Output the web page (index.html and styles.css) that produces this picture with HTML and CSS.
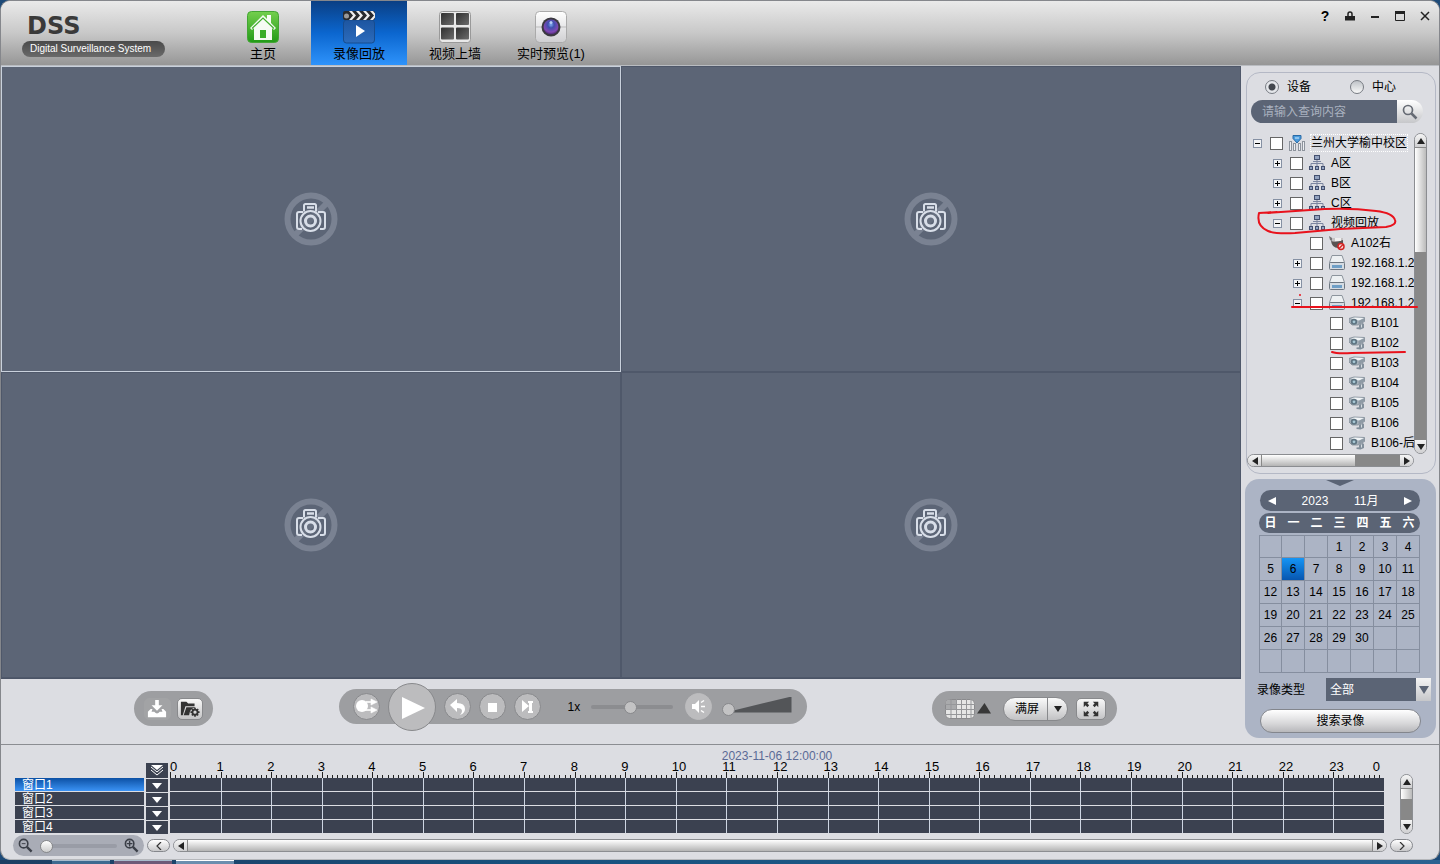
FILE: index.html
```html
<!DOCTYPE html>
<html lang="zh-CN">
<head>
<meta charset="utf-8">
<title>DSS - 录像回放</title>
<link rel="stylesheet" href="styles.css">
</head>
<body>
<svg class="defs" aria-hidden="true">
  <defs>
    <linearGradient id="gGreen" x1="0" y1="0" x2="0" y2="1"><stop offset="0" stop-color="#74cf4e"/><stop offset="1" stop-color="#229a17"/></linearGradient>
    <linearGradient id="gBlue" x1="0" y1="0" x2="0" y2="1"><stop offset="0" stop-color="#1d55a0"/><stop offset="1" stop-color="#2c6cbd"/></linearGradient>
    <linearGradient id="gDark" x1="0" y1="0" x2="1" y2="1"><stop offset="0" stop-color="#2f2f2f"/><stop offset="1" stop-color="#6c6c6c"/></linearGradient>
    <linearGradient id="gLight" x1="0" y1="0" x2="0" y2="1"><stop offset="0" stop-color="#ffffff"/><stop offset="1" stop-color="#cfcfd2"/></linearGradient>
    <radialGradient id="gLens" cx=".5" cy=".35" r=".7"><stop offset="0" stop-color="#7fa8f0"/><stop offset=".3" stop-color="#3f4fae"/><stop offset=".7" stop-color="#8148b5"/><stop offset="1" stop-color="#33204e"/></radialGradient>
  </defs>
  <symbol id="nocam" viewBox="0 0 54 54">
    <circle cx="27" cy="27" r="23.5" fill="none" stroke="#7a8292" stroke-width="6"/>
    <path d="M11 43 43 11" stroke="#7a8292" stroke-width="6"/>
    <path d="M13 20h6l2-2v-6h11v6l2 2h6v18H13z" fill="#5c6576" fill-opacity=".6"/>
    <g fill="none" stroke="#d8dee8" stroke-width="2">
      <path d="M20 19.500v-6q0-1.500 1.500-1.500h9q1.500 0 1.500 1.500v6M18 37h-3q-2 0-2-2V22q0-2 2-2h4M34 20h5q2 0 2 2v13q0 2-2 2h-3"/>
      <circle cx="26.500" cy="29" r="10"/><circle cx="26.500" cy="29" r="5" stroke-width="3"/>
      <path d="M23 15.500h7" stroke-width="2.500"/>
    </g>
  </symbol>
  <symbol id="org" viewBox="0 0 16 16">
    <g fill="#93a3c0" stroke="#44506f"><rect x="5.500" y=".5" width="5" height="4"/><rect x=".5" y="11.500" width="3" height="3"/><rect x="6.500" y="11.500" width="3" height="3"/><rect x="12.500" y="11.500" width="3" height="3"/></g>
    <path d="M8 5v6M2 11V8.500h12V11M4 6.500h8" fill="none" stroke="#7c86a0"/>
  </symbol>
  <symbol id="root" viewBox="0 0 16 16">
    <g fill="#eceef2" stroke="#8d939c"><rect x=".5" y="6.500" width="2" height="9"/><rect x="4.500" y="8.500" width="2" height="7"/><rect x="9.500" y="8.500" width="2" height="7"/><rect x="13.500" y="6.500" width="2" height="9"/></g>
    <path d="M4 .5h8v3L8 8 4 3.500z" fill="#4a9bdc" stroke="#2a6aa5"/><path d="M6 3h4" stroke="#d3ecff"/>
  </symbol>
  <symbol id="dome" viewBox="0 0 16 16">
    <path d="M0 1l3 2h11v4L9 8 2 6z" fill="#c4c2c3"/><path d="M0 1l3 2v3L1 5z" fill="#77767a"/><path d="M2 6q5 2 12-1 1 8-5 8-6 0-7-7z" fill="#5a5352"/><path d="M6 3h6v3H6z" fill="#efefef"/>
    <circle cx="12" cy="11.500" r="3" fill="#f7dada" stroke="#d32424" stroke-width="1.500"/><path d="M10 13.500l4-4" stroke="#d32424" stroke-width="1.500"/>
  </symbol>
  <symbol id="nvr" viewBox="0 0 16 16">
    <path d="M3 .5h10l2.500 7H.5z" fill="#edf0f2" stroke="#8c949d"/><rect x=".5" y="7.500" width="15" height="7" rx="1" fill="#d5dce3" stroke="#6d7680"/><rect x="3" y="10" width="10" height="3" fill="#6f9fc6"/>
  </symbol>
  <symbol id="cam" viewBox="0 0 16 16">
    <path d="M0 3.500 5 2l10.500.5v4L9 10H3L0 7z" fill="#a9b3bc" stroke="#7f8a95" stroke-width=".8"/>
    <path d="M2 3.300 6 2.500l9 .5-5 2.500z" fill="#f1f4f6"/><path d="M9.500 6 15 3.500v2.800L9.500 9.500z" fill="#8e9aa5"/>
    <ellipse cx="5" cy="6.800" rx="3.200" ry="3" fill="#5e7482"/><circle cx="5" cy="6.800" r="1.400" fill="#a8c9d6"/>
    <path d="M10 10l3.500-2 1.500 1v4l-3.500 1.500-4-.5v-1.500l2.500-.3z" fill="#828f9b"/><path d="M12.500 9.500v3" stroke="#d6dde2"/>
  </symbol>
  <symbol id="mag" viewBox="0 0 16 16"><circle cx="6" cy="6" r="4.500" fill="none" stroke="currentColor" stroke-width="1.700"/><path d="M9.500 9.500l5 5" stroke="currentColor" stroke-width="2.500"/></symbol>
</svg>

<div class="window">
  <header class="topbar">
    <div class="brand"><h1 class="brand-name">DSS</h1><span class="brand-sub">Digital Surveillance System</span></div>
    <nav class="tabs">
      <button class="tab"><svg viewBox="0 0 34 34"><rect x="1.500" y="1.500" width="31" height="31" rx="4" fill="url(#gGreen)" stroke="#43a535"/><path d="M4 18 17 5l4 4V5h4v8l5 5-2 2-2-2v12H8V18l-2 2z" fill="#fff" opacity=".95"/><path d="M6 18.500 17 8l11 10.500" fill="none" stroke="#43b02f" stroke-width="1.200"/><path d="M14 20h6v8h-6z" fill="#3aad28"/></svg><span>主页</span></button>
      <button class="tab tab-on"><svg viewBox="0 0 34 34"><rect x="1.500" y="10" width="31" height="23" rx="3" fill="url(#gBlue)" stroke="#174c8e"/><rect x="1" y="1" width="32" height="9" rx="2" fill="#292b2e"/><path d="M7 1h3l4 4.500L10 10H7l4-4.500zM14 1h3l4 4.500-4 4.500h-3l4-4.500zM21 1h3l4 4.500-4 4.500h-3l4-4.500zM28 1h3l2 2.500v4L31 10h-3l4-4.500z" fill="#eee"/><circle cx="4.500" cy="6" r="2.500" fill="#999"/><path d="M14 15l9 6-9 6z" fill="#fff"/></svg><span>录像回放</span></button>
      <button class="tab"><svg viewBox="0 0 34 34"><rect x="1.500" y="1.500" width="31" height="31" rx="3" fill="#e9e9e9" stroke="#999"/><g fill="url(#gDark)"><rect x="3" y="3" width="13" height="12" rx="1"/><rect x="18" y="3" width="13" height="12" rx="1"/><rect x="3" y="17.500" width="13" height="12" rx="1"/><rect x="18" y="17.500" width="13" height="12" rx="1"/></g></svg><span>视频上墙</span></button>
      <button class="tab"><svg viewBox="0 0 34 34"><rect x="1.500" y="1.500" width="31" height="31" rx="4" fill="url(#gLight)" stroke="#aaa"/><path d="M2 17h30" stroke="#bbb"/><circle cx="17" cy="17" r="9.500" fill="#3b3940"/><circle cx="17" cy="17" r="7.500" fill="url(#gLens)"/><circle cx="17" cy="12.500" r="1.500" fill="#b7ccf5"/></svg><span>实时预览(1)</span></button>
    </nav>
    <div class="winbtns">
      <button aria-label="帮助">?</button>
      <button aria-label="锁定"><svg viewBox="0 0 10 10"><path d="M3 5V3q0-2 2-2t2 2v2" fill="none" stroke="#222" stroke-width="1.500"/><path d="M0 5h10v4.500H0z" fill="#222"/></svg></button>
      <button aria-label="最小化"><svg viewBox="0 0 10 10"><path d="M1 6h8" stroke="#222" stroke-width="2"/></svg></button>
      <button aria-label="最大化"><svg viewBox="0 0 10 10"><path d="M.5 1v8.500h9V1" fill="none" stroke="#222"/><path d="M0 1.500h10" stroke="#222" stroke-width="3"/></svg></button>
      <button aria-label="关闭"><svg viewBox="0 0 10 10"><path d="M1 1l8 8M9 1l-8 8" stroke="#222" stroke-width="1.500"/></svg></button>
    </div>
  </header>

  <main class="main">
    <section class="stage">
      <div class="videos">
        <div class="video video-on"><svg class="nocam"><use href="#nocam"/></svg></div>
        <div class="video"><svg class="nocam"><use href="#nocam"/></svg></div>
        <div class="video"><svg class="nocam"><use href="#nocam"/></svg></div>
        <div class="video"><svg class="nocam"><use href="#nocam"/></svg></div>
      </div>
      <div class="controls">
        <div class="pill pill-files">
          <button class="sq sq-off" aria-label="下载"><svg viewBox="0 0 26 22"><path d="M11 1h4v6h4l-6 6-6-6h4z" fill="#fff"/><path d="M3 14l3-3h2l-1 3h3q3 4 6 0h3l-1-3h2l3 3v6H3z" fill="#fff"/></svg></button>
          <button class="sq" aria-label="文件设置"><svg viewBox="0 0 26 22"><path d="M3 3h6l2 2h7v3H8L5 18H3z" fill="#333"/><path d="M9 9h10l-1 1q-5 0-6 8H6z" fill="#333"/><circle cx="18.500" cy="14.500" r="2.800" fill="none" stroke="#333" stroke-width="2"/><path d="M18.500 9.500v2M18.500 17.500v2M13.500 14.500h2M21.500 14.500h2M15 11l1.500 1.500M20.500 16.500 22 18M15 18l1.500-1.500M20.500 12.500 22 11" stroke="#333" stroke-width="1.800"/></svg></button>
        </div>
        <div class="pill pill-play">
          <button class="rd" aria-label="同步"><svg viewBox="0 0 27 27"><circle cx="9" cy="13" r="6" fill="#fff"/><path d="M13 8.500h5V6l6 3-6 3V9.500h-5zM13 16.500h5V14l6 3-6 3v-2.500h-5z" fill="#fff" stroke="#fff" stroke-width=".6"/></svg></button>
          <button class="rd rd-big" aria-label="播放"><svg viewBox="0 0 48 48"><path d="M14 14l23 11-23 11z" fill="#fff"/></svg></button>
          <button class="rd" aria-label="倒放"><svg viewBox="0 0 27 27"><path d="M6 12l7-6v4q8 0 8 6 0 4-5 6 2-2 2-4 0-3-5-3v4z" fill="#fff"/></svg></button>
          <button class="rd" aria-label="停止"><svg viewBox="0 0 27 27"><path d="M9 10h9v9H9z" fill="#fff"/></svg></button>
          <button class="rd" aria-label="单帧播放"><svg viewBox="0 0 27 27"><path d="M8 7l7 6-7 6zM14 8h5v2h-1v8h1v2h-5v-2h1v-8h-1z" fill="#fff"/></svg></button>
          <label class="speed" for="speed">1x</label>
          <input class="range" id="speed" type="range" value="49">
          <button class="rd rd-flat" aria-label="静音"><svg viewBox="0 0 27 27"><path d="M7 11h3l4-4v13l-4-4H7z" fill="#fff"/><path d="M16 13.500h4M16 9.500l3-2M16 17.500l3 2" stroke="#fff" stroke-width="1.500"/></svg></button>
          <span class="volume"><input class="range range-vol" type="range" value="0" aria-label="音量"></span>
        </div>
        <div class="pill pill-view">
          <button class="bare" aria-label="画面分割"><svg class="split" viewBox="0 0 46 22"><rect x=".5" y="1.500" width="29" height="19" rx="4" fill="#e6e6e6" stroke="#8a8a8d"/><path d="M1 5q0-3 3-3h7v9H1z" fill="#a9aaac"/><path d="M6 1v19M11.500 1v19M16.500 1v19M21.500 1v19M26 2v18M0 6.500h30M0 11.500h30M0 16.500h30" stroke="#96979a"/><path d="M32 15.500 39.500 5l6.500 10.500z" fill="#383838"/></svg></button>
          <div class="fullpill"><button class="full">满屏</button><button class="drop" aria-label="更多比例"><i class="tri down"></i></button></div>
          <button class="sq" aria-label="全屏"><svg viewBox="0 0 26 22"><path d="M5 3h6L9 5l2 2-2 2-2-2-2 2zM21 3v6l-2-2-2 2-2-2 2-2-2-2zM5 19v-6l2 2 2-2 2 2-2 2 2 2zM21 19h-6l2-2-2-2 2-2 2 2 2-2z" fill="#333"/></svg></button>
        </div>
      </div>
    </section>

    <aside class="side">
      <section class="devices">
        <div class="modes">
          <label class="mode"><input class="radio" type="radio" name="mode" checked>设备</label>
          <label class="mode"><input class="radio" type="radio" name="mode">中心</label>
        </div>
        <form class="search">
          <input class="search-text" type="text" placeholder="请输入查询内容" aria-label="请输入查询内容">
          <button class="search-go" type="button" aria-label="查询"><svg><use href="#mag"/></svg></button>
        </form>
        <div class="treebox">
          <ul class="tree">
            <li><div class="node node-sel"><button class="exp exp-open" aria-label="收起"></button><label><input class="check" type="checkbox"><svg><use href="#root"/></svg><span>兰州大学榆中校区</span></label></div>
              <ul>
                <li><div class="node"><button class="exp" aria-label="展开"></button><label><input class="check" type="checkbox"><svg><use href="#org"/></svg><span>A区</span></label></div></li>
                <li><div class="node"><button class="exp" aria-label="展开"></button><label><input class="check" type="checkbox"><svg><use href="#org"/></svg><span>B区</span></label></div></li>
                <li><div class="node"><button class="exp" aria-label="展开"></button><label><input class="check" type="checkbox"><svg><use href="#org"/></svg><span>C区</span></label></div></li>
                <li><div class="node"><button class="exp exp-open" aria-label="收起"></button><label><input class="check" type="checkbox"><svg><use href="#org"/></svg><span>视频回放</span></label></div>
                  <ul>
                    <li><div class="node leaf"><label><input class="check" type="checkbox"><svg><use href="#dome"/></svg><span>A102右</span></label></div></li>
                    <li><div class="node"><button class="exp" aria-label="展开"></button><label><input class="check" type="checkbox"><svg><use href="#nvr"/></svg><span>192.168.1.2</span></label></div></li>
                    <li><div class="node"><button class="exp" aria-label="展开"></button><label><input class="check" type="checkbox"><svg><use href="#nvr"/></svg><span>192.168.1.2</span></label></div></li>
                    <li><div class="node"><button class="exp exp-open" aria-label="收起"></button><label><input class="check" type="checkbox"><svg><use href="#nvr"/></svg><span>192.168.1.2</span></label></div>
                      <ul>
                        <li><div class="node leaf"><label><input class="check" type="checkbox"><svg><use href="#cam"/></svg><span>B101</span></label></div></li>
                        <li><div class="node leaf"><label><input class="check" type="checkbox"><svg><use href="#cam"/></svg><span>B102</span></label></div></li>
                        <li><div class="node leaf"><label><input class="check" type="checkbox"><svg><use href="#cam"/></svg><span>B103</span></label></div></li>
                        <li><div class="node leaf"><label><input class="check" type="checkbox"><svg><use href="#cam"/></svg><span>B104</span></label></div></li>
                        <li><div class="node leaf"><label><input class="check" type="checkbox"><svg><use href="#cam"/></svg><span>B105</span></label></div></li>
                        <li><div class="node leaf"><label><input class="check" type="checkbox"><svg><use href="#cam"/></svg><span>B106</span></label></div></li>
                        <li><div class="node leaf"><label><input class="check" type="checkbox"><svg><use href="#cam"/></svg><span>B106-后</span></label></div></li>
                      </ul></li>
                  </ul></li>
              </ul></li>
          </ul>
          <div class="vbar"><button class="sb" aria-label="向上"><i class="tri up"></i></button><div class="vtrack"><div class="vthumb thumb-tree"></div></div><button class="sb" aria-label="向下"><i class="tri down"></i></button></div>
        </div>
        <div class="hbar hbar-tree"><button class="sb" aria-label="向左"><i class="tri left"></i></button><div class="htrack"><div class="hthumb thumb-side"></div></div><button class="sb" aria-label="向右"><i class="tri right"></i></button></div>
      </section>

      <section class="cal">
        <i class="notch"></i>
        <div class="cal-head"><button aria-label="上个月"><i class="tri left"></i></button><span>2023</span><span>11月</span><button aria-label="下个月"><i class="tri right"></i></button></div>
        <table class="cal-table">
          <thead><tr><th>日</th><th>一</th><th>二</th><th>三</th><th>四</th><th>五</th><th>六</th></tr></thead>
          <tbody id="days"></tbody>
        </table>
        <div class="kind"><label for="kind">录像类型</label><span class="kind-wrap"><select id="kind"><option>全部</option></select><i class="tri down"></i></span></div>
        <button class="find">搜索录像</button>
      </section>

      <svg class="marks" viewBox="1241 66 198 400" fill="none" stroke="#e8121c" stroke-width="2" stroke-linecap="round" stroke-linejoin="round" aria-hidden="true">
        <path d="M1277 212 1259 213Q1256 226 1268 231 1275 234 1295 233L1340 229 1386 227Q1397 225 1395 220 1393 213 1376 211 1345 207 1310 210L1268 213"/>
        <path d="M1292 307h125M1332 352q5 2 20 1l53-1M1300 295v0"/>
      </svg>
    </aside>
  </main>

  <section class="timeline">
    <time class="now">2023-11-06 12:00:00</time>
    <div class="lanes">
      <ul class="names"><li class="name-on">窗口1</li><li>窗口2</li><li>窗口3</li><li>窗口4</li></ul>
      <div class="drops">
        <button class="drop-all" aria-label="全部"><svg viewBox="0 0 16 12"><path d="M2 0h12L8 5z" fill="#fff"/><path d="M2 2l6 5 6-5M2 5l6 5 6-5" fill="none" stroke="#fff"/></svg></button>
        <button aria-label="窗口1"><i class="tri down"></i></button><button aria-label="窗口2"><i class="tri down"></i></button><button aria-label="窗口3"><i class="tri down"></i></button><button aria-label="窗口4"><i class="tri down"></i></button>
      </div>
      <div class="tracks"><div class="ruler" id="ruler"></div><div class="grid" id="grid"></div></div>
      <div class="vbar vbar-time"><button class="sb" aria-label="向上"><i class="tri up"></i></button><div class="vtrack"><div class="vthumb thumb-time"></div></div><button class="sb" aria-label="向下"><i class="tri down"></i></button></div>
    </div>
    <div class="foot">
      <div class="zoombar"><button aria-label="缩小"><svg viewBox="0 0 16 16"><use href="#mag"/><path d="M4 6h4" stroke="#3b3f48"/></svg></button><input class="range range-zoom" type="range" value="0" aria-label="缩放"><button aria-label="放大"><svg viewBox="0 0 16 16"><use href="#mag"/><path d="M3 6h6M6 3v6" stroke="#3b3f48" stroke-width="1.500"/></svg></button></div>
      <button class="step" aria-label="前一段"><svg viewBox="0 0 8 8"><path d="M6 0 2 4l4 4" fill="none" stroke="#333" stroke-width="1.200"/></svg></button>
      <div class="hbar"><button class="sb" aria-label="向左"><i class="tri left"></i></button><div class="htrack"><div class="hthumb"></div></div><button class="sb" aria-label="向右"><i class="tri right"></i></button></div>
      <button class="step" aria-label="后一段"><svg viewBox="0 0 8 8"><path d="M2 0l4 4-4 4" fill="none" stroke="#333" stroke-width="1.200"/></svg></button>
    </div>
  </section>
</div>
<div class="desktop"><i></i><i class="rose"></i><i class="lit"></i></div>
<script src="app.js"></script>
</body>
</html>
```
FILE: app.js
```js
// November 2023 starts on a Wednesday and has 30 days.
const days = document.getElementById('days');
for (let week = 0; week < 6; week++) {
  const tr = days.insertRow();
  for (let d = 0; d < 7; d++) {
    const n = week * 7 + d - 2;
    const td = tr.insertCell();
    if (n > 0 && n <= 30) td.textContent = n;
    if (n === 6) td.className = 'today';
  }
}

// One ruler segment per hour, ten ticks each.
const ruler = document.getElementById('ruler');
for (let h = 0; h < 24; h++) {
  const seg = document.createElement('div');
  seg.className = 'hour';
  seg.innerHTML = '<span>' + h + '</span>' + '<i></i>'.repeat(10);
  ruler.append(seg);
}
const end = document.createElement('span');
end.className = 'ruler-end';
end.textContent = '0';
ruler.append(end);

const grid = document.getElementById('grid');
for (let r = 0; r < 4; r++) {
  const row = document.createElement('div');
  row.className = 'lane';
  row.innerHTML = '<i></i>'.repeat(24);
  grid.append(row);
}
```
FILE: styles.css
```css
* { box-sizing: border-box; }
body {
  margin: 0; height: 100vh; display: flex; flex-direction: column; overflow: hidden;
  background: #1d4a78; color: #000;
  font: 12px/16px "Liberation Sans", "Noto Sans CJK SC", sans-serif;
}
button, input, select { font: inherit; color: inherit; margin: 0; padding: 0; }
button { border: 0; background: none; display: flex; align-items: center; justify-content: center; }
ul { list-style: none; margin: 0; padding: 0; }
svg { display: block; flex: none; }
.defs { position: absolute; width: 0; height: 0; }

.window {
  flex: 1; min-height: 0; display: flex; flex-direction: column; overflow: hidden;
  background: #dcdde2; border: 1px solid #85878c; border-bottom-color: #b5b7bb; border-radius: 10px;
}

/* top bar */
.topbar {
  height: 65px; flex: none; display: flex;
  background: linear-gradient(#eaeaea, #c8c8c8 50%, #969696);
  border-bottom: 1px solid #b9bcc1;
}
.brand { width: 214px; padding: 11px 0 0 21px; }
.brand-name { margin: 0; padding-left: 5px; font: bold 24px/29px "DejaVu Sans", sans-serif; color: #3a3a3a; }
.brand-sub {
  display: block; width: 143px; height: 16px; padding-left: 8px; border-radius: 8px;
  background: linear-gradient(#4a4a4a, #6a6a6a); color: #fff; font-size: 10px; line-height: 15px;
}
.tabs { display: flex; flex: 1; }
.tab { width: 96px; flex-direction: column; justify-content: flex-start; padding-top: 9px; gap: 1px; font-size: 13px; line-height: 18px; }
.tab svg { width: 34px; height: 34px; }
.tab-on { background: linear-gradient(#0a3f84, #0b66cf 50%, #2e93fb); }
.winbtns { display: flex; gap: 5px; padding: 5px 4px 0 0; align-self: flex-start; }
.winbtns button { width: 20px; height: 20px; font: bold 14px/20px "Liberation Sans", sans-serif; }
.winbtns svg { width: 10px; height: 10px; }

/* main */
.main { flex: 1; min-height: 0; display: grid; grid-template-columns: 1fr 198px; border-bottom: 1px solid #8b8d92; }
.stage { display: flex; flex-direction: column; min-width: 0; }
.videos { flex: 1; display: grid; grid-template: 1fr 1fr / 1fr 1fr; border-bottom: 1px solid #4b5466; }
.video { display: grid; place-items: center; background: #5c6576; border: 1px solid #4f586a; }
.video-on { border-color: #c9d1dc; }
.nocam { width: 54px; height: 54px; }

.controls { height: 65px; flex: none; display: flex; align-items: center; justify-content: space-between; padding: 0 124px 6px 133px; }
.pill { display: flex; align-items: center; height: 35px; border-radius: 18px; background: #9d9ea1; }
.pill-files { gap: 6px; padding: 0 10px; width: 79px; }
.pill-play { gap: 8px; padding: 0 14px; width: 468px; margin-bottom: 4px; }
.pill-view { padding: 0 11px 0 13px; width: 185px; }
.sq { width: 27px; height: 22px; border-radius: 5px; border: 1px solid #88898c; background: linear-gradient(#f8f8f8, #c4c4c6); }
.sq svg { width: 24px; height: 20px; }
.pill-view .sq { width: 30px; }
.sq-off { background: #a2a3a5; border-color: #a2a3a5; }
.rd { width: 27px; height: 27px; flex: none; border-radius: 50%; background: #bcbcbe; border: 1px solid #88898c; }
.rd svg { width: 27px; height: 27px; }
.rd-big { width: 48px; height: 48px; }
.rd-big svg { width: 48px; height: 48px; }
.rd-flat { border-color: #bcbcbe; margin-left: 4px; }
.speed { width: 23px; margin-left: 19px; text-align: left; }
.speed + .range { margin-left: -8px; }
.range { appearance: none; width: 82px; height: 16px; background: none; }
.range::-webkit-slider-runnable-track { height: 4px; border-radius: 2px; background: #8c8d90; }
.range::-webkit-slider-thumb { appearance: none; width: 13px; height: 13px; margin-top: -4px; border-radius: 50%; background: #c3c3c4; border: 1px solid #87888b; }
.volume { width: 70px; height: 20px; margin-left: 2px; position: relative; }
.volume::before { content: ""; display: block; height: 16px; margin-left: 10px; background: #535558; clip-path: polygon(0 90%, 100% 0, 100% 100%, 0 100%); }
.range-vol { position: absolute; left: 0; bottom: 0; width: 70px; }
.range-vol::-webkit-slider-runnable-track { background: none; }
.bare { height: 22px; }
.split { width: 46px; height: 22px; }
.fullpill { display: flex; width: 65px; height: 24px; margin: 0 8px 0 12px; border-radius: 12px; overflow: hidden; border: 1px solid #88898c; background: linear-gradient(#fafafa, #c2c2c4); }
.full { flex: 1; padding-left: 3px; }
.drop { width: 20px; border-left: 1px solid #88898c; }

/* sidebar */
.side { position: relative; display: flex; flex-direction: column; gap: 5px; padding: 6px 3px 6px 5px; min-height: 0; }
.devices { flex: 1; min-height: 0; display: flex; flex-direction: column; padding: 5px 8px 6px 0; border: 1px solid #b4b8c5; border-radius: 14px; }
.modes { display: flex; gap: 39px; padding-left: 18px; height: 17px; }
.mode { display: flex; align-items: center; gap: 8px; }
.radio { appearance: none; width: 14px; height: 14px; border-radius: 50%; border: 1px solid #777b82; background: linear-gradient(#bfc3c8, #f8f8f8); }
.radio:checked { background: radial-gradient(circle, #43474e 0 3px, #e4e6ea 4px); }
.search { display: flex; height: 23px; margin: 5px 4px 10px 4px; border-radius: 12px; overflow: hidden; }
.search-text { flex: 1; min-width: 0; border: 0; padding-left: 11px; background: #5b6475; color: #fff; }
.search-text::placeholder { color: #a9b1bf; opacity: 1; }
.search-go { width: 26px; background: linear-gradient(#fff, #c6c7ca); color: #666b74; }
.search-go svg { width: 16px; height: 16px; }
.treebox { flex: 1; min-height: 0; display: flex; }
.tree { flex: 1; min-width: 0; overflow: hidden; padding-left: 6px; }
.tree ul { padding-left: 20px; }
.node { height: 20px; display: flex; align-items: center; gap: 8px; white-space: nowrap; }
.node label { display: flex; align-items: center; gap: 6px; }
.node svg { width: 16px; height: 16px; }
.node-sel span { outline: 1px dotted #fff; }
.leaf { padding-left: 17px; }
.exp { position: relative; width: 9px; height: 9px; flex: none; border: 1px solid #8590a3; background: linear-gradient(#000, #000) center / 5px 1px no-repeat, linear-gradient(#000, #000) center / 1px 5px no-repeat, #f2f3f5; }
.exp-open { background: linear-gradient(#000, #000) center / 5px 1px no-repeat, #f2f3f5; }
.check { appearance: none; width: 13px; height: 13px; flex: none; border: 1px solid #666; background: #fff; }

/* scroll bars */
.tri { display: block; width: 0; height: 0; border: 4px solid transparent; }
.tri.up { border-width: 0 4px 6px; border-bottom-color: #222; }
.tri.down { border-width: 6px 4px 0; border-top-color: #222; }
.tri.left { border-width: 4px 6px 4px 0; border-right-color: #222; }
.tri.right { border-width: 4px 0 4px 6px; border-left-color: #222; }
.sb { flex: none; width: 13px; height: 13px; background: linear-gradient(#f5f5f5, #cfcfd1); }
.vbar { width: 13px; flex: none; display: flex; flex-direction: column; border-radius: 7px; overflow: hidden; border: 1px solid #8b8d91; }
.vbar .sb { width: 11px; }
.vtrack { flex: 1; background: #888; }
.vthumb { background: linear-gradient(90deg, #fff, #bbb); border-top: 1px solid #888; }
.thumb-tree { height: 36%; }
.hbar { height: 13px; flex: 1; min-width: 0; display: flex; border-radius: 7px; overflow: hidden; border: 1px solid #8b8d91; }
.hbar .sb { height: 11px; }
.htrack { flex: 1; background: #888; }
.hthumb { height: 100%; background: linear-gradient(#fff, #b4b4b4); border: 0 solid #888; border-width: 0 1px; }
.hbar-tree { flex: none; margin-right: 13px; }
.thumb-side { width: 68%; }

/* calendar */
.cal { display: flex; flex-direction: column; height: 259px; margin-left: -1px; padding: 11px 5px 5px 14px; border-radius: 14px; background: #acb4c5; position: relative; }
.notch { position: absolute; top: 1px; left: 50%; margin-left: -15px; border: 14px solid transparent; border-width: 6px 14px 0; border-top-color: #5b6475; }
.cal-head { display: flex; align-items: center; justify-content: space-between; width: 160px; height: 21px; margin-left: 1px; padding: 0 8px; border-radius: 11px; background: #5b6475; color: #fff; }
.cal-head .left { border-width: 4px 8px 4px 0; border-right-color: #fff; }
.cal-head .right { border-width: 4px 0 4px 8px; border-left-color: #fff; }
.cal-table { width: 161px; margin-top: 2px; border-spacing: 0; table-layout: fixed; text-align: center; }
.cal-table th { height: 20px; padding: 0; background: #5b6475; color: #fff; font-weight: bold; line-height: 20px; }
.cal-table th:first-child { border-radius: 10px 0 0 10px; }
.cal-table th:last-child { border-radius: 0 10px 10px 0; }
.cal-table td { height: 23px; padding: 0; border: 0 solid #858e9f; border-width: 0 1px 1px 0; }
.cal-table td:first-child { border-left-width: 1px; }
.cal-table tbody tr:first-child td { border-top-width: 1px; }
.cal-table .today { background: linear-gradient(#1595f5, #0756b0); }
.cal-table thead::after { content: ""; display: block; height: 2px; }
.kind { display: flex; align-items: center; justify-content: space-between; margin-top: 5px; margin-left: -2px; }
.kind-wrap { position: relative; width: 105px; }
.kind select { appearance: none; display: block; width: 105px; height: 23px; padding-left: 4px; border: 0; border-radius: 0; color: #fff; background: linear-gradient(#f4f4f4, #c6c7ca) right / 15px 23px no-repeat, #5b6475; }
.kind-wrap .tri { position: absolute; right: 2px; top: 8px; border-width: 8px 5px 0; border-top-color: #5b6475; pointer-events: none; }
.find { width: 161px; height: 24px; margin: 8px 0 0 1px; border: 1px solid #83868d; border-radius: 12px; background: linear-gradient(#fff, #d8d8da 60%, #b8b8bb); }
.marks { position: absolute; left: 0; top: 0; width: 198px; height: 400px; pointer-events: none; }

/* timeline */
.timeline { flex: none; padding: 2px 26px 3px 12px; }
.now { display: block; margin-left: 128px; height: 16px; line-height: 18px; text-align: center; color: #5a6a96; }
.lanes { display: flex; padding-left: 2px; }
.names { width: 129px; padding-top: 15px; }
.names li { height: 13px; margin-bottom: 1px; padding-left: 7px; background: #3b4150; color: #fff; line-height: 14px; overflow: hidden; }
.names .name-on { background: linear-gradient(#0c50a4, #3b93f5); }
.drops { width: 22px; margin-left: 2px; display: flex; flex-direction: column; gap: 1px; }
.drops button { height: 13px; background: #3b4150; }
.drops .drop-all { height: 15px; }
.drops .drop-all svg { width: 16px; height: 12px; }
.drops .down { border-width: 6px 5px 0; border-top-color: #fff; }
.tracks { flex: 1; min-width: 0; margin-left: 2px; }
.ruler { position: relative; display: flex; height: 15px; }
.hour { position: relative; flex: 1; display: flex; align-items: flex-end; }
.hour span, .ruler-end { position: absolute; bottom: 4px; font-size: 13px; line-height: 14px; }
.hour span { left: -4px; }
.hour:first-child span { left: 0; }
.ruler-end { right: 4px; }
.hour i { flex: 1; height: 3px; border-left: 1px solid #222; }
.hour span + i { height: 6px; }
.lane { display: flex; height: 13px; margin-bottom: 1px; background: #3b4150; }
.lane i { flex: 1; border-left: 1px solid #cdd5e2; }
.lane i:first-child { border-color: #3b4150; }
.vbar-time { margin: 11px 0 0 16px; height: 60px; }
.thumb-time { height: 34%; }
.foot { display: flex; align-items: center; margin-top: 1px; }
.zoombar { width: 131px; height: 21px; display: flex; align-items: center; gap: 7px; padding: 0 5px; border-radius: 11px; background: #a9acb6; color: #3b3f48; }
.zoombar svg { width: 15px; height: 15px; }
.range-zoom { flex: 1; min-width: 0; }
.range-zoom::-webkit-slider-runnable-track { background: #999ca6; }
.range-zoom::-webkit-slider-thumb { background: linear-gradient(#fff, #ccc); }
.step { width: 23px; height: 13px; margin: 0 3px; border: 1px solid #85878c; border-radius: 7px; background: linear-gradient(#fff, #c8c8ca); }
.step svg { width: 8px; height: 8px; }
.step:last-child { margin-right: 0; }

.desktop { flex: none; height: 4px; display: flex; gap: 4px; padding-left: 52px; background: linear-gradient(90deg, #1c3f63, #17527f 40%, #2a6291); }
.desktop i { width: 58px; border-top: 1px solid #a8bccd; background: #3d6a90; }
.desktop .rose { background: #6d5a78; }
.desktop .lit { border-top-color: #fff; background: #6b8eae; }
```
